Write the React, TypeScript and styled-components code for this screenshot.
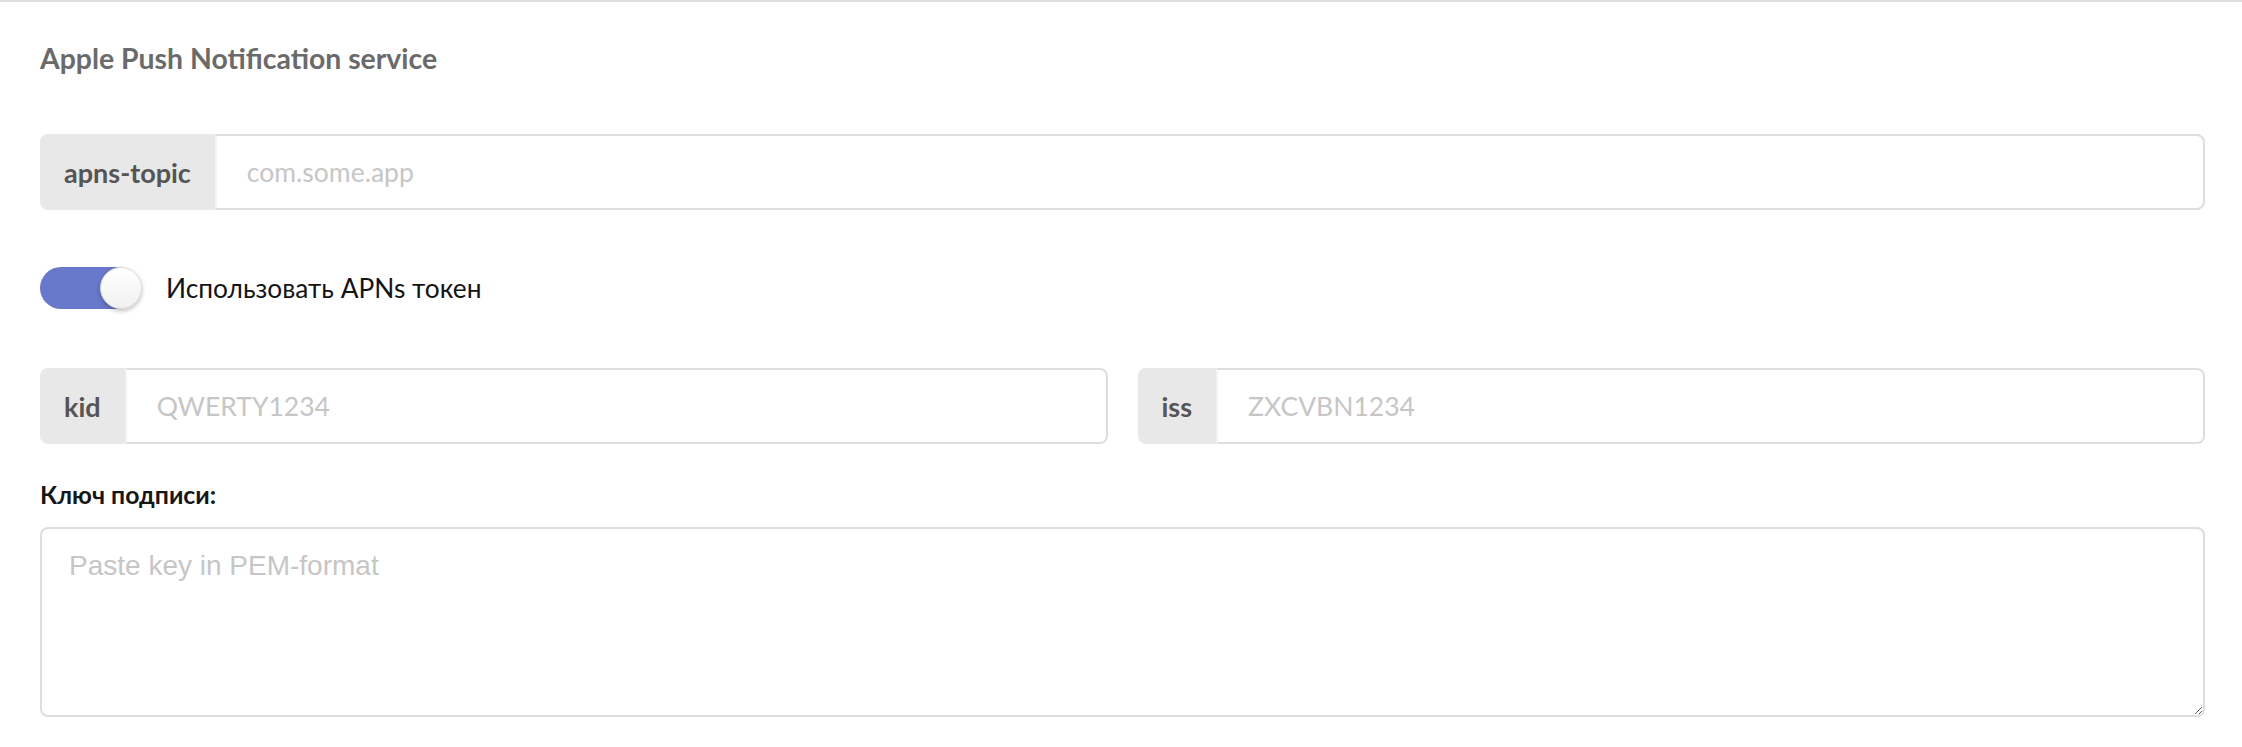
import { useState } from "react";
import styled, { createGlobalStyle } from "styled-components";

const GlobalStyle = createGlobalStyle`
  html, body {
    margin: 0;
    padding: 0;
    background: #ffffff;
  }
  body {
    font-family: "Lato", "Roboto", sans-serif;
  }
`;

const App = () => {
  const [useToken, setUseToken] = useState(true);

  return (
    <>
      <GlobalStyle />
      <Panel>
        <Title>Apple Push Notification service</Title>

        <TopicGroup>
          <Addon>apns-topic</Addon>
          <Input placeholder="com.some.app" />
        </TopicGroup>

        <SwitchRow>
          <Switch
            type="button"
            $on={useToken}
            onClick={() => setUseToken(!useToken)}
          >
            <Knob />
          </Switch>
          <SwitchLabel>Использовать APNs токен</SwitchLabel>
        </SwitchRow>

        <TwoCols>
          <InputGroup>
            <Addon>kid</Addon>
            <Input placeholder="QWERTY1234" />
          </InputGroup>
          <InputGroup>
            <Addon>iss</Addon>
            <Input placeholder="ZXCVBN1234" />
          </InputGroup>
        </TwoCols>

        <FieldLabel>Ключ подписи:</FieldLabel>
        <KeyArea placeholder="Paste key in PEM-format" />
      </Panel>
    </>
  );
};

const Panel = styled.div`
  border-top: 2px solid #dedede;
  padding: 38px 37px 0 40px;
  display: flex;
  flex-direction: column;
`;

const Title = styled.h3`
  margin: 0;
  font-size: 28.4px;
  line-height: 36px;
  font-weight: 700;
  color: #6a6a6a;
`;

const InputGroup = styled.div`
  display: flex;
  height: 76px;
`;

const TopicGroup = styled(InputGroup)`
  margin-top: 58px;
`;

const Addon = styled.span`
  display: flex;
  align-items: center;
  padding: 0 24px;
  background: #e8e8e8;
  border-radius: 8px 0 0 8px;
  font-size: 27px;
  font-weight: 700;
  color: #555555;
`;

const Input = styled.input`
  flex: 1;
  min-width: 0;
  box-sizing: border-box;
  height: 100%;
  margin: 0;
  padding: 0 30px;
  border: 2px solid #dedede;
  border-left-color: #f2f2f2;
  border-radius: 0 8px 8px 0;
  font-family: "Lato", "Roboto", sans-serif;
  font-size: 26.5px;
  color: #333;
  outline: none;
  &::placeholder {
    color: #c6c6c6;
  }
`;

const SwitchRow = styled.div`
  display: flex;
  align-items: center;
  gap: 30px;
  margin-top: 57px;
`;

const Switch = styled.button<{ $on: boolean }>`
  display: flex;
  align-items: center;
  justify-content: ${(p) => (p.$on ? "flex-end" : "flex-start")};
  width: 96px;
  height: 42px;
  padding: 0;
  margin: 0;
  border: none;
  border-radius: 21px;
  background: ${(p) => (p.$on ? "#6878cb" : "#d5d5d5")};
  cursor: pointer;
`;

const Knob = styled.span`
  width: 42px;
  height: 42px;
  box-sizing: border-box;
  margin-right: -6px;
  border-radius: 50%;
  border: 1px solid #dadada;
  background: linear-gradient(180deg, #ffffff 0%, #f1f1f1 100%);
  box-shadow: 0 2px 4px rgba(0, 0, 0, 0.25);
`;

const SwitchLabel = styled.span`
  font-size: 26.3px;
  line-height: 34px;
  color: #141414;
`;

const TwoCols = styled.div`
  display: grid;
  grid-template-columns: 1fr 1fr;
  gap: 30px;
  margin-top: 59px;
`;

const FieldLabel = styled.label`
  margin-top: 35px;
  font-size: 24.8px;
  line-height: 32px;
  font-weight: 700;
  color: #161616;
`;

const KeyArea = styled.textarea`
  box-sizing: border-box;
  height: 190px;
  margin: 16px 0 0;
  padding: 21px 27px;
  border: 2px solid #dedede;
  border-radius: 8px;
  font-family: "Liberation Sans", Arial, sans-serif;
  font-size: 28px;
  color: #333;
  outline: none;
  resize: vertical;
  &::placeholder {
    color: #c6c6c6;
  }
`;

export default App;
